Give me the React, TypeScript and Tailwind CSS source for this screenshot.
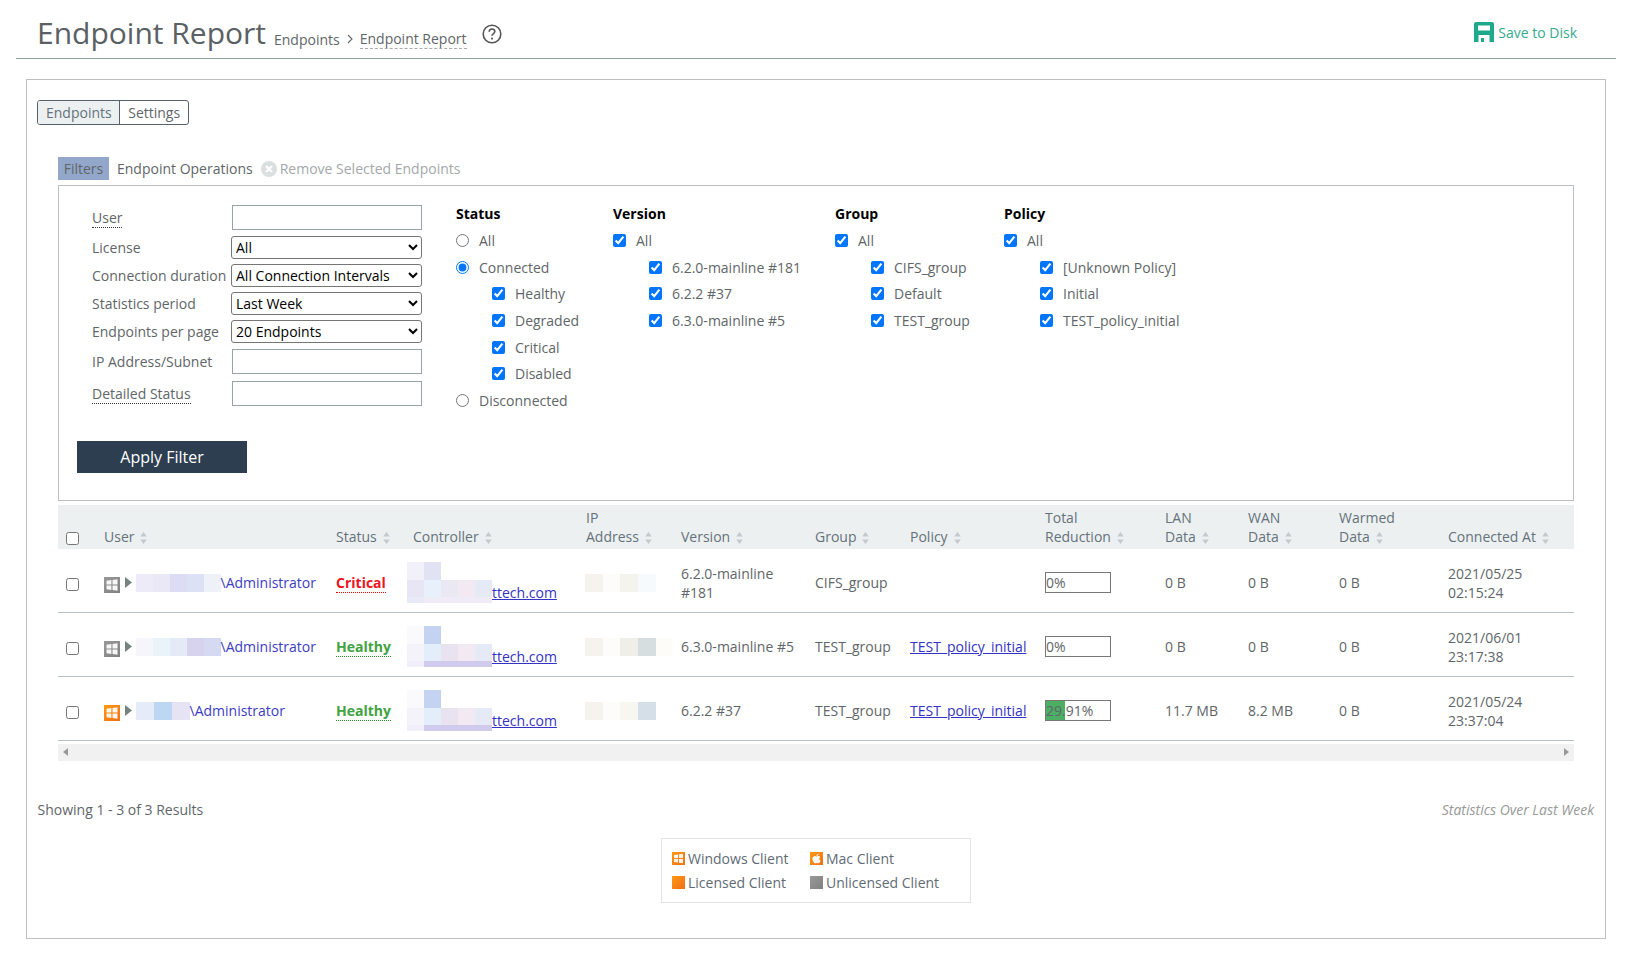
import React from "react";
import { FaApple } from "react-icons/fa";

const text = "text-[#5f6669]";

function Sort() {
  return (
    <svg width="7" height="12" viewBox="0 0 7 12" className="inline-block ml-[6px] align-[-2px]">
      <path d="M3.5 0 L6.8 4.6 L0.2 4.6 Z" fill="#c3c9cd" />
      <path d="M3.5 12 L6.8 7.4 L0.2 7.4 Z" fill="#c3c9cd" />
    </svg>
  );
}

function WinIcon({ orange, size = 16 }: { orange?: boolean; size?: number }) {
  return (
    <svg width={size} height={size} viewBox="0 0 16 16" className="shrink-0">
      <defs>
        <linearGradient id="wo" x1="0" y1="0" x2="1" y2="1">
          <stop offset="0" stopColor="#ff9a10" />
          <stop offset="1" stopColor="#ee6e1a" />
        </linearGradient>
        <linearGradient id="wg" x1="0" y1="0" x2="1" y2="1">
          <stop offset="0" stopColor="#999999" />
          <stop offset="1" stopColor="#808080" />
        </linearGradient>
      </defs>
      <rect width="16" height="16" fill={orange ? "url(#wo)" : "url(#wg)"} />
      <path d="M2.5 3.8 L7.4 3 V7.5 H2.5 Z M8.5 2.9 L13.5 2.2 V7.5 H8.5 Z M2.5 8.5 H7.4 V13 L2.5 12.2 Z M8.5 8.5 H13.5 V13.8 L8.5 13.1 Z" fill="#fff" fillOpacity="0.92" />
    </svg>
  );
}

function Mosaic({ rows, cell = 17 }: { rows: { h: number; c: string[] }[]; cell?: number }) {
  return (
    <div className="flex flex-col shrink-0">
      {rows.map((r, i) => (
        <div key={i} className="flex">
          {r.c.map((c, j) => (
            <div key={j} style={{ width: cell, height: r.h, background: c }} />
          ))}
        </div>
      ))}
    </div>
  );
}

function Check({ x, label, checked = true, radio }: { x?: boolean; label: string; checked?: boolean; radio?: boolean }) {
  return (
    <label className={`flex items-center h-[26.7px] ${x ? "pl-[36px]" : ""}`}>
      <input type={radio ? "radio" : "checkbox"} defaultChecked={checked} name={radio ? "st" : undefined} className="m-0 w-[13px] h-[13px] shrink-0" />
      <span className={`ml-[10px] ${text}`}>{label}</span>
    </label>
  );
}

function CheckGroup({ title, items, w }: { title: string; items: string[]; w: string }) {
  return (
    <div className={w}>
      <div className="h-[23px] font-bold text-black leading-[19px]">{title}</div>
      <Check label="All" />
      {items.map((i) => (
        <Check key={i} x label={i} />
      ))}
    </div>
  );
}

const selectCls = "w-[191px] h-[23px] border border-[#767676] rounded-[3px] bg-white text-black pl-0 text-[14px] leading-[19px]";
const inputCls = "w-[190px] h-[25px] border border-[#95a5a6] bg-white ml-[1px] block";

function FRow({ label, dotted, mt, children }: { label: string; dotted?: boolean; mt: string; children: React.ReactNode }) {
  return (
    <div className={`flex items-center ${mt}`}>
      <div className="w-[139px] shrink-0">
        <span className={`${text} ${dotted ? "border-b border-dotted border-[#333]" : ""}`}>{label}</span>
      </div>
      {children}
    </div>
  );
}

const users = [
  ["#ecebf7", "#eae8f6", "#dcdcf4", "#dde1f6", "#eef1f8"],
  ["#f6f5fb", "#e9f3fa", "#e5eaf7", "#d7d2ee", "#d5d9f2"],
  ["#e5ebf8", "#bdd7f3", "#e6e3f5"],
];
const ctrl = [
  [
    { h: 18, c: ["#f2f0f8", "#e2e2f5"] },
    { h: 17, c: ["#e8e5f5", "#e8f1fb", "#e9e8f3", "#f3e9f2", "#e6eaf7"] },
    { h: 6, c: ["#e9eaf8", "#efecf8", "#efecf8", "#efecf8", "#efecf8"] },
  ],
  [
    { h: 18, c: ["#fafafc", "#c5d3f2"] },
    { h: 17, c: ["#f5f3fa", "#e3eefa", "#e8e2f1", "#f2e9f2", "#e6eaf6"] },
    { h: 6, c: ["#f0effa", "#d0caed", "#d0caed", "#d0caed", "#d0caed"] },
  ],
  [
    { h: 18, c: ["#fafafc", "#c5d3f2"] },
    { h: 17, c: ["#f5f3fa", "#e3eefa", "#e8e2f1", "#f2e9f2", "#e6eaf6"] },
    { h: 6, c: ["#f0effa", "#d0caed", "#d0caed", "#d0caed", "#d0caed"] },
  ],
];
const ips = [
  ["#f6f3ee", "#fdfcfa", "#f5f3ee", "#f7fafd"],
  ["#f6f3ee", "#fdfcfa", "#f0eee8", "#d6dedf", "#fdfcf9"],
  ["#f6f3ee", "#fdfcfa", "#f8f6f0", "#d4dfe7"],
];

const rows = [
  { status: "Critical", orange: false, ver: "6.2.0-mainline #181", group: "CIFS_group", policy: "", pct: "0%", fill: 0, lan: "0 B", wan: "0 B", warm: "0 B", at: ["2021/05/25", "02:15:24"] },
  { status: "Healthy", orange: false, ver: "6.3.0-mainline #5", group: "TEST_group", policy: "TEST_policy_initial", pct: "0%", fill: 0, lan: "0 B", wan: "0 B", warm: "0 B", at: ["2021/06/01", "23:17:38"] },
  { status: "Healthy", orange: true, ver: "6.2.2 #37", group: "TEST_group", policy: "TEST_policy_initial", pct: "29.91%", fill: 29.91, lan: "11.7 MB", wan: "8.2 MB", warm: "0 B", at: ["2021/05/24", "23:37:04"] },
];

function Th({ w, children, cls = "" }: { w: string; children?: React.ReactNode; cls?: string }) {
  return <th className={`${w} ${cls} font-normal text-left align-bottom pb-[3px] text-[#66727a]`}>{children}</th>;
}

export default function App() {
  return (
    <div className={`w-[1634px] h-[961px] overflow-hidden bg-white font-['Open_Sans',sans-serif] text-[14px] leading-[19px] ${text}`}>
      <header className="ml-[16px] w-[1600px] h-[59px] border-b border-[#8fa3a0] flex items-end pl-[21px] pr-[39px]">
        <h1 className="text-[30px] leading-[41px] text-[#5a6063] font-normal mb-[5px]">Endpoint Report</h1>
        <div className="flex items-center ml-[8px] mb-[9px]">
          <span>Endpoints</span>
          <svg width="6" height="10" viewBox="0 0 6 10" className="mx-[7px]"><path d="M1 1 L5 5 L1 9" fill="none" stroke="#666" strokeWidth="1.1" /></svg>
          <span className="border-b border-dashed border-[#aaa]">Endpoint Report</span>
        </div>
        <svg width="20" height="20" viewBox="0 0 20 20" className="ml-[15px] mb-[14px]">
          <circle cx="10" cy="10" r="8.8" fill="none" stroke="#555" strokeWidth="1.6" />
          <path d="M7.2 7.8 C7.2 5.9 8.6 5 10 5 C11.6 5 12.8 6 12.8 7.5 C12.8 9.5 10 9.6 10 11.8" fill="none" stroke="#555" strokeWidth="1.6" />
          <circle cx="10" cy="14.6" r="1.05" fill="#555" />
        </svg>
        <div className="ml-auto flex items-center mb-[16px] text-[#35a98f]">
          <svg width="20" height="20" viewBox="0 0 20 20" className="mr-[4px]">
            <path fillRule="evenodd" d="M2 0 H18 Q20 0 20 2 V20 H15.5 V13 H4.5 V20 H0 V2 Q0 0 2 0 Z M4 3.5 V8.5 H16 V3.5 Z" fill="#1fa98c" />
            <rect x="7" y="16" width="3" height="4" fill="#1fa98c" />
          </svg>
          <span>Save to Disk</span>
        </div>
      </header>

      <main className="ml-[26px] mt-[20px] w-[1580px] h-[860px] border border-[#bcc0c2] pl-[10px] pt-[20px] relative">
        <div className="flex h-[25px] w-fit border border-[#55636b] rounded-[3px]">
          <div className="pl-[8px] pr-[7px] bg-[#ecf0f1] border-r border-[#55636b] leading-[23px] rounded-l-[2px] text-[#66727a]">Endpoints</div>
          <div className="pl-[8.5px] pr-[7.5px] leading-[23px]">Settings</div>
        </div>

        <div className="ml-[21px] w-[1516px]">
          <div className="mt-[32px] flex items-center h-[23px]">
            <div className="w-[51px] h-[23px] bg-[#92a7c9] text-center leading-[23px] text-[#5f6669]">Filters</div>
            <span className="ml-[8px] text-[#5f6669]">Endpoint Operations</span>
            <svg width="16" height="16" viewBox="0 0 16 16" className="ml-[8px]">
              <circle cx="8" cy="8" r="8" fill="#dcdfe0" />
              <path d="M5 5 L11 11 M11 5 L5 11" stroke="#fff" strokeWidth="2.2" />
            </svg>
            <span className="ml-[3px] text-[#a4a8aa]">Remove Selected Endpoints</span>
          </div>

          <section className="mt-[5px] h-[316px] border border-[#bcc0c2] relative">
            <div className="flex pt-[19px]">
              <div className="ml-[33px] w-[330px]">
                <FRow label="User" dotted mt=""><input className={inputCls} /></FRow>
                <FRow label="License" mt="mt-[6px]">
                  <select className={selectCls}><option>All</option></select>
                </FRow>
                <FRow label="Connection duration" mt="mt-[5px]">
                  <select className={selectCls}><option>All Connection Intervals</option></select>
                </FRow>
                <FRow label="Statistics period" mt="mt-[5px]">
                  <select className={selectCls}><option>Last Week</option></select>
                </FRow>
                <FRow label="Endpoints per page" mt="mt-[5px]">
                  <select className={selectCls}><option>20 Endpoints</option></select>
                </FRow>
                <FRow label="IP Address/Subnet" mt="mt-[6px]"><input className={inputCls} /></FRow>
                <FRow label="Detailed Status" dotted mt="mt-[7px]"><input className={inputCls} /></FRow>
              </div>
              <div className="flex ml-[34px] -mt-[1px]">
                <div className="w-[157px]">
                  <div className="h-[23px] font-bold text-black">Status</div>
                  <Check radio checked={false} label="All" />
                  <Check radio label="Connected" />
                  <Check x label="Healthy" />
                  <Check x label="Degraded" />
                  <Check x label="Critical" />
                  <Check x label="Disabled" />
                  <Check radio checked={false} label="Disconnected" />
                </div>
                <CheckGroup w="w-[222px]" title="Version" items={["6.2.0-mainline #181", "6.2.2 #37", "6.3.0-mainline #5"]} />
                <CheckGroup w="w-[169px]" title="Group" items={["CIFS_group", "Default", "TEST_group"]} />
                <CheckGroup w="w-[220px]" title="Policy" items={["[Unknown Policy]", "Initial", "TEST_policy_initial"]} />
              </div>
            </div>
            <button className="absolute left-[18px] top-[255px] w-[170px] h-[32px] bg-[#2c3e50] text-white text-[16px]">Apply Filter</button>
          </section>

          <table className="mt-[4px] w-[1516px] table-fixed border-collapse">
            <thead>
              <tr className="h-[44px] bg-[#ecf0f1]">
                <Th w="w-[46px]" cls="pl-[8px] !pb-[4px]"><input type="checkbox" className="m-0 w-[13px] h-[13px] block" /></Th>
                <Th w="w-[232px]">User<Sort /></Th>
                <Th w="w-[71px]">Status<Sort /></Th>
                <Th w="w-[179px]" cls="pl-[6px]">Controller<Sort /></Th>
                <Th w="w-[95px]">IP<br />Address<Sort /></Th>
                <Th w="w-[134px]">Version<Sort /></Th>
                <Th w="w-[95px]">Group<Sort /></Th>
                <Th w="w-[135px]">Policy<Sort /></Th>
                <Th w="w-[120px]">Total<br />Reduction<Sort /></Th>
                <Th w="w-[83px]">LAN<br />Data<Sort /></Th>
                <Th w="w-[91px]">WAN<br />Data<Sort /></Th>
                <Th w="w-[109px]">Warmed<br />Data<Sort /></Th>
                <Th w="w-[126px]">Connected At<Sort /></Th>
              </tr>
            </thead>
            <tbody>
              {rows.map((r, i) => (
                <tr key={i} className={`border-b border-[#b9c0c8] ${i === 0 ? "h-[63px]" : "h-[64px]"}`}>
                  <td className="pl-[8px] pt-[9px]"><input type="checkbox" className="m-0 w-[13px] h-[13px] block" /></td>
                  <td className="pt-[5px]">
                    <div className="flex items-center">
                      <div className="mt-[5px]"><WinIcon orange={r.orange} /></div>
                      <svg width="7" height="11" viewBox="0 0 7 11" className="ml-[5px] mr-[3.5px]"><path d="M0 0 L7 5.5 L0 11 Z" fill="#74837f" /></svg>
                      <Mosaic rows={[{ h: 18, c: users[i] }]} cell={i === 2 ? 18 : 17} />
                      <span className="text-[#3c3cc4]">\Administrator</span>
                    </div>
                  </td>
                  <td className="pt-[5px]">
                    <span className={`font-bold border-b border-dotted ${r.status === "Critical" ? "text-[#f0141e] border-[#e00]" : "text-[#3fa33f] border-[#2a9a2a]"}`}>{r.status}</span>
                  </td>
                  <td className="pt-[5px]">
                    <div className="flex items-end">
                      <Mosaic rows={ctrl[i]} />
                      <a className="underline text-[#3333c4] mb-[1px]">ttech.com</a>
                    </div>
                  </td>
                  <td className="pt-[5px]"><div className="-ml-[1px]"><Mosaic rows={[{ h: 18, c: ips[i] }]} cell={17.7} /></div></td>
                  <td className="pt-[5px] pr-[10px]"><div className={i === 0 ? "w-[100px]" : ""}>{r.ver}</div></td>
                  <td className="pt-[5px]">{r.group}</td>
                  <td className="pt-[5px]">{r.policy && <a className="underline text-[#3333c4]">{r.policy}</a>}</td>
                  <td className="pt-[5px]">
                    <div className="relative w-[66px] h-[21px] border-[1.5px] border-[#777] leading-[20px] -mt-[1px]">
                      <div className="absolute left-0 top-0 bottom-0 bg-[#4caf63]" style={{ width: `${r.fill}%` }} />
                      <span className="relative">{r.pct}</span>
                    </div>
                  </td>
                  <td className="pt-[5px]">{r.lan}</td>
                  <td className="pt-[5px]">{r.wan}</td>
                  <td className="pt-[5px]">{r.warm}</td>
                  <td className="pt-[5px]">{r.at[0]}<br />{r.at[1]}</td>
                </tr>
              ))}
            </tbody>
          </table>

          <div className="mt-[3px] h-[17px] bg-[#f1f1f1] flex items-center justify-between px-[5px]">
            <svg width="6" height="8" viewBox="0 0 6 8"><path d="M5 0 L0 4 L5 8 Z" fill="#999" /></svg>
            <svg width="6" height="8" viewBox="0 0 6 8"><path d="M1 0 L6 4 L1 8 Z" fill="#999" /></svg>
          </div>
        </div>

        <div className="mt-[39px] ml-[0.5px] mr-[11px] flex justify-between">
          <span>Showing 1 - 3 of 3 Results</span>
          <span className="italic text-[#999]">Statistics Over Last Week</span>
        </div>

        <div className="ml-[624px] mt-[19px] w-[310px] h-[65px] border border-[#e2e4e5] pl-[10px] pt-[10px] text-[#5f6b75]">
          <div className="grid grid-cols-[138px_1fr] gap-y-[5px]">
            <div className="flex items-center h-[19px]"><WinIcon orange size={13} /><span className="ml-[3px]">Windows Client</span></div>
            <div className="flex items-center h-[19px]">
              <div className="w-[13px] h-[13px] bg-gradient-to-br from-[#ff9a10] to-[#ee6e1a] flex items-center justify-center text-white"><FaApple size={11} /></div>
              <span className="ml-[3px]">Mac Client</span>
            </div>
            <div className="flex items-center h-[19px]"><div className="w-[13px] h-[13px] bg-gradient-to-br from-[#ff9a10] to-[#ee6e1a]" /><span className="ml-[3px]">Licensed Client</span></div>
            <div className="flex items-center h-[19px]"><div className="w-[13px] h-[13px] bg-gradient-to-br from-[#999] to-[#808080]" /><span className="ml-[3px]">Unlicensed Client</span></div>
          </div>
        </div>
      </main>
    </div>
  );
}
